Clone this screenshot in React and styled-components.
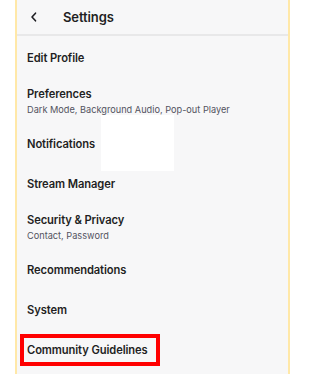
import React from "react";
import styled, { createGlobalStyle } from "styled-components";

const Global = createGlobalStyle`
  html, body { margin: 0; padding: 0; background: #ffffff; }
  body { font-family: Inter, "Noto Sans", Arial, sans-serif; }
  * { box-sizing: border-box; }
`;

const Panel = styled.div`
  position: relative;
  margin-left: 15px;
  width: 275px;
  height: 374px;
  background: #f7f7f8;
  border-left: 2px solid #ffe8a8;
  border-right: 2px solid #ffe8a8;
  overflow: hidden;
`;

const Header = styled.div`
  display: flex;
  align-items: center;
  height: 36px;
  border-bottom: 2px solid #e8e8e9;
  padding-left: 13px;
  padding-bottom: 1px;
`;

const Back = styled.span`
  display: flex;
  width: 33px;
  color: #1f1f23;
`;

const Title = styled.h1`
  margin: 0;
  font-size: 13px;
  font-weight: 600;
  color: #1f1f23;
  letter-spacing: -0.1px;
`;

const List = styled.div`
  display: flex;
  flex-direction: column;
  padding-top: 2px;
`;

const Row = styled.div`
  display: flex;
  flex-direction: column;
  justify-content: center;
  gap: 2px;
  height: ${(p) => (p.$double ? 46 : 40)}px;
  padding-left: 10px;
`;

const Label = styled.span`
  position: relative;
  align-self: flex-start;
  font-size: 11.2px;
  line-height: 15px;
  font-weight: 600;
  color: #1f1f23;
  letter-spacing: -0.1px;
`;

const Highlight = styled(Label)`
  &::after {
    content: "";
    position: absolute;
    left: -7px;
    right: -12px;
    top: -9px;
    bottom: -8px;
    border: 4px solid #ff0000;
  }
`;

const Sub = styled.span`
  font-size: 9.2px;
  line-height: 12px;
  color: #53535f;
`;

const Redact = styled.div`
  position: absolute;
  left: 84px;
  top: 115px;
  width: 73px;
  height: 56px;
  background: #ffffff;
`;

const items = [
  { label: "Edit Profile" },
  { label: "Preferences", sub: "Dark Mode, Background Audio, Pop-out Player" },
  { label: "Notifications", short: true },
  { label: "Stream Manager" },
  { label: "Security & Privacy", sub: "Contact, Password" },
  { label: "Recommendations" },
  { label: "System" },
  { label: "Community Guidelines", highlight: true },
];

export default function App() {
  return (
    <>
      <Global />
      <Panel>
        <Header>
          <Back>
            <svg width="8" height="10" viewBox="0 0 8 10" fill="none">
              <path d="M5.5 1.2 L2 5 L5.5 8.8" stroke="currentColor" strokeWidth="1.6" strokeLinecap="round" strokeLinejoin="round" />
            </svg>
          </Back>
          <Title>Settings</Title>
        </Header>
        <List>
          {items.map((it) => (
            <Row key={it.label} $double={!!it.sub}>
              {it.highlight ? <Highlight>{it.label}</Highlight> : <Label>{it.label}</Label>}
              {it.sub && <Sub>{it.sub}</Sub>}
            </Row>
          ))}
        </List>
        <Redact />
      </Panel>
    </>
  );
}
